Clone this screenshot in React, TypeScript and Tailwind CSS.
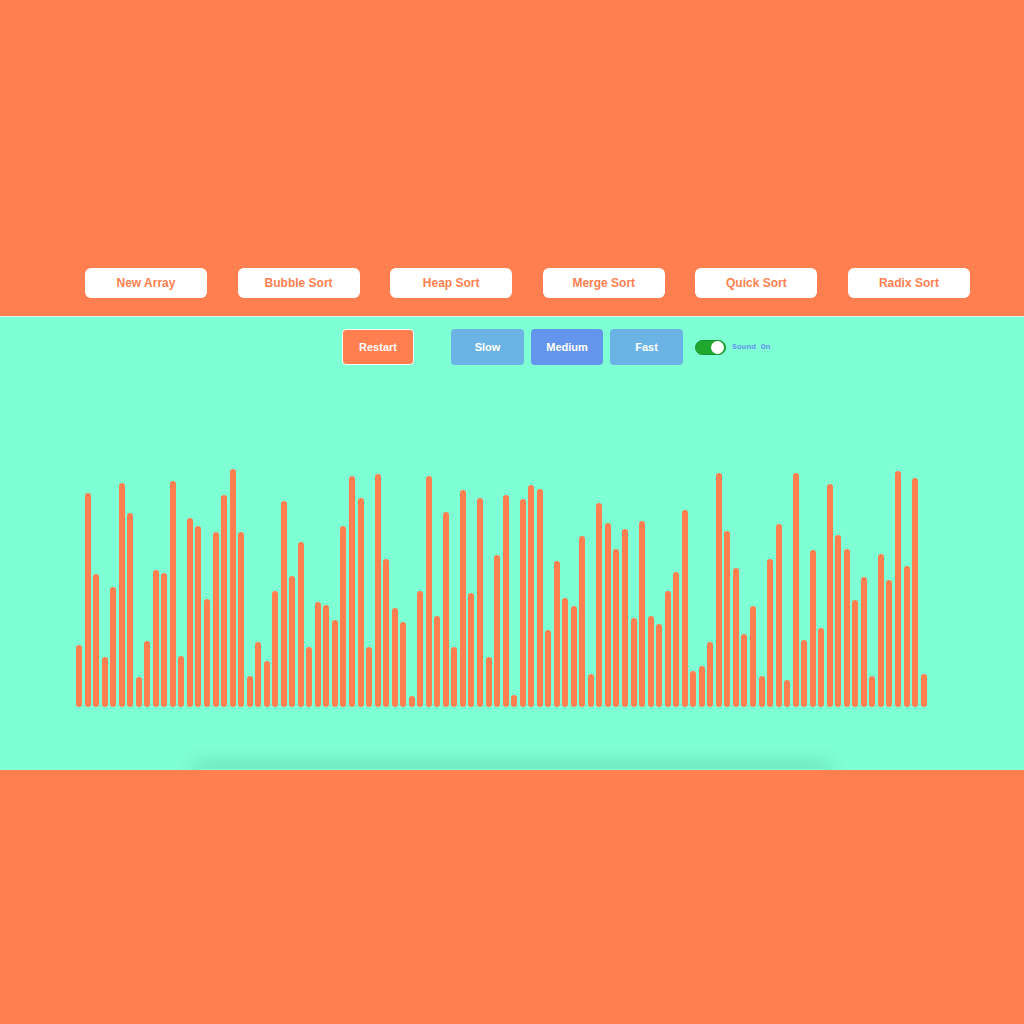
import React from "react";

const bars = [
  62, 214, 133, 50, 120, 224, 194, 30, 66, 137, 134, 226, 51, 189, 181, 108, 175, 212, 238, 175,
  31, 65, 46, 116, 206, 131, 165, 60, 105, 102, 87, 181, 231, 209, 60, 233, 148, 99, 85, 11,
  116, 231, 91, 195, 60, 217, 114, 209, 50, 152, 212, 12, 208, 222, 218, 77, 146, 109, 101, 171,
  33, 204, 184, 158, 178, 89, 186, 91, 83, 116, 135, 197, 36, 41, 65, 234, 176, 139, 73, 101,
  31, 148, 183, 27, 234, 67, 157, 79, 223, 172, 158, 107, 130, 31, 153, 127, 236, 141, 229, 33,
];

const algos = ["New Array", "Bubble Sort", "Heap Sort", "Merge Sort", "Quick Sort", "Radix Sort"];

function SpeedButton({ label, active }: { label: string; active?: boolean }) {
  return (
    <button
      className={
        active
          ? "h-[36px] w-[72px] rounded-[4px] bg-[#6495ed] text-[11px] font-bold text-white"
          : "h-[36px] w-[73px] rounded-[4px] bg-[#6cb3e5] text-[11px] font-bold text-white"
      }
    >
      {label}
    </button>
  );
}

export default function App() {
  return (
    <div className="h-[1024px] w-[1024px] bg-[#ff7f50] font-['Liberation_Sans',Arial,sans-serif]">
      {/* algorithm buttons */}
      <div className="flex h-[316px] gap-[30.6px] pl-[85px] pt-[268px]">
        {algos.map((a) => (
          <button key={a} className="h-[30px] w-[122px] rounded-[6px] bg-white text-[12px] font-bold text-[#ff7f50]">
            {a}
          </button>
        ))}
      </div>

      {/* visualizer */}
      <div className="relative flex h-[454px] flex-col overflow-hidden border-t border-[#e2f7ec] bg-[#7fffd4]">
        <div className="flex items-center pl-[342px] pt-[12px]">
          <button className="h-[36px] w-[72px] rounded-[4px] border border-[#eefff8] bg-[#ff7f50] text-[11px] font-bold text-white">
            Restart
          </button>
          <div className="ml-[37px] flex gap-[7px]">
            <SpeedButton label="Slow" />
            <SpeedButton label="Medium" active />
            <SpeedButton label="Fast" />
          </div>
          <div className="ml-[12px] flex h-[15px] w-[31px] items-center justify-end rounded-full border border-[#17942a] bg-[#1fa82e] pr-[1px]">
            <div className="h-[13px] w-[13px] rounded-full bg-white" />
          </div>
          <span className="ml-[6px] font-['Liberation_Mono',monospace] text-[8px] font-bold text-[#6495ed]">Sound On</span>
        </div>

        <div className="ml-[76px] mt-[102px] flex h-[240px] w-[851px] items-end justify-between">
          {bars.map((h, i) => (
            <div key={i} className="w-[6px] rounded-full bg-[#ff7f50]" style={{ height: h }} />
          ))}
        </div>

        <div className="mx-auto mt-auto h-px w-[620px] shadow-[0_0_18px_8px_rgba(0,90,60,0.16)]" />
      </div>
    </div>
  );
}
